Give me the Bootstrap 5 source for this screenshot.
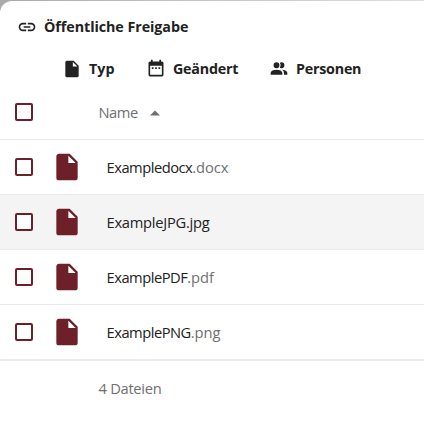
<!DOCTYPE html>
<html lang="de">
<head>
<meta charset="utf-8">
<meta name="viewport" content="width=device-width, initial-scale=1">
<title>Öffentliche Freigabe</title>
<link href="https://cdn.jsdelivr.net/npm/bootstrap@5.3.0/dist/css/bootstrap.min.css" rel="stylesheet">
<style>
body{font-family:"Open Sans","Noto Sans",sans-serif;font-size:14.7px;line-height:22px;color:#222;height:424px;overflow:hidden;background:linear-gradient(90deg,#aaa,#c4c4c4 45%,#dedede)}
.panel{height:423px;border-top-left-radius:12px;margin-top:1px}
svg{fill:currentColor;flex:none}
.crumb{height:51px;padding-left:17px}
.crumb span{margin-left:7px;letter-spacing:-.06px}
.filters{height:33px;padding-left:62px}
.filters span{margin-left:7px;letter-spacing:-.23px;padding-top:1px}
.filters .kind{width:84px}
.filters .kind span{letter-spacing:0}
.filters .changed{width:123px}
.crumb span,.filters span{font-weight:700;font-size:14.3px;white-space:nowrap}
.file-row{height:55px;border-bottom:1px solid #e8e8e8;padding-left:15px}
.file-row.hovered{background:#f4f4f4}
.file-row.final{height:56px;border-bottom:2px solid #ebebeb}
.form-check-input.tick{width:18px;height:18px;margin:0;border:2px solid #6d2028;border-radius:2px;background-color:#fff;flex:none}
.doc{color:#6d2028;margin-left:18px}
.fname{margin-left:23.5px;white-space:nowrap;letter-spacing:-.48px}
.fname.full{letter-spacing:-.25px}
.fname .soft{letter-spacing:-.08px}
.soft{color:#6f6f6f}
.colname{margin-left:65.5px;letter-spacing:-.45px}
.arrow{margin-left:11px;margin-top:1px}
.total{padding-left:98.5px;height:54px;letter-spacing:-.28px}
</style>
<script src="https://cdn.jsdelivr.net/npm/bootstrap@5.3.0/dist/js/bootstrap.bundle.min.js"></script>
</head>
<body>
<svg class="d-none"><defs>
<path id="file" d="M13,9V3.5L18.5,9M6,2C4.89,2 4,2.89 4,4V20A2,2 0 0,0 6,22H18A2,2 0 0,0 20,20V8L14,2H6Z"/>
</defs></svg>
<main class="panel bg-white">
<div class="crumb d-flex align-items-center">
<svg width="20" height="20" viewBox="0 0 24 24"><path d="M3.9,12C3.9,10.29 5.29,8.9 7,8.9H11V7H7A5,5 0 0,0 2,12A5,5 0 0,0 7,17H11V15.1H7C5.29,15.1 3.9,13.71 3.9,12M8,13H16V11H8V13M17,7H13V8.9H17C18.71,8.9 20.1,10.29 20.1,12C20.1,13.71 18.71,15.1 17,15.1H13V17H17A5,5 0 0,0 22,12A5,5 0 0,0 17,7Z"/></svg>
<span>Öffentliche Freigabe</span></div>
<div class="filters d-flex align-items-center">
<div class="kind d-flex align-items-center"><svg width="20" height="20" viewBox="0 0 24 24"><use href="#file"/></svg><span>Typ</span></div>
<div class="changed d-flex align-items-center"><svg width="20" height="20" viewBox="0 0 24 24"><path d="M9,10H7V12H9V10M13,10H11V12H13V10M17,10H15V12H17V10M19,3H18V1H16V3H8V1H6V3H5C3.89,3 3,3.9 3,5V19A2,2 0 0,0 5,21H19A2,2 0 0,0 21,19V5A2,2 0 0,0 19,3M19,19H5V8H19V19Z"/></svg><span>Geändert</span></div>
<div class="d-flex align-items-center"><svg width="20" height="20" viewBox="0 0 24 24"><path d="M16 17V19H2V17S2 13 9 13 16 17 16 17M12.5 7.5A3.5 3.5 0 1 0 9 11A3.5 3.5 0 0 0 12.5 7.5M15.94 13A5.32 5.32 0 0 1 18 17V19H22V17S22 13.37 15.94 13M15 4A3.39 3.39 0 0 0 13.07 4.59A5 5 0 0 1 13.07 10.41A3.39 3.39 0 0 0 15 11A3.5 3.5 0 0 0 15 4Z"/></svg><span>Personen</span></div>
</div>
<div class="file-row d-flex align-items-center"><input class="form-check-input tick" type="checkbox" aria-label="Alle auswählen"><span class="colname soft">Name</span><svg class="arrow soft" width="12" height="6" viewBox="0 0 12 6"><path d="M1 5.5 6 .5 11 5.5Z"/></svg></div>
<div class="file-row d-flex align-items-center"><input class="form-check-input tick" type="checkbox" aria-label="Exampledocx"><svg class="doc" width="32" height="32" viewBox="0 0 24 24"><use href="#file"/></svg><span class="fname">Exampledocx<span class="soft">.docx</span></span></div>
<div class="file-row hovered d-flex align-items-center"><input class="form-check-input tick" type="checkbox" aria-label="ExampleJPG"><svg class="doc" width="32" height="32" viewBox="0 0 24 24"><use href="#file"/></svg><span class="fname full">ExampleJPG.jpg</span></div>
<div class="file-row d-flex align-items-center"><input class="form-check-input tick" type="checkbox" aria-label="ExamplePDF"><svg class="doc" width="32" height="32" viewBox="0 0 24 24"><use href="#file"/></svg><span class="fname">ExamplePDF<span class="soft">.pdf</span></span></div>
<div class="file-row final d-flex align-items-center"><input class="form-check-input tick" type="checkbox" aria-label="ExamplePNG"><svg class="doc" width="32" height="32" viewBox="0 0 24 24"><use href="#file"/></svg><span class="fname">ExamplePNG<span class="soft">.png</span></span></div>
<div class="total soft d-flex align-items-center">4 Dateien</div>
</main>
</body>
</html>
